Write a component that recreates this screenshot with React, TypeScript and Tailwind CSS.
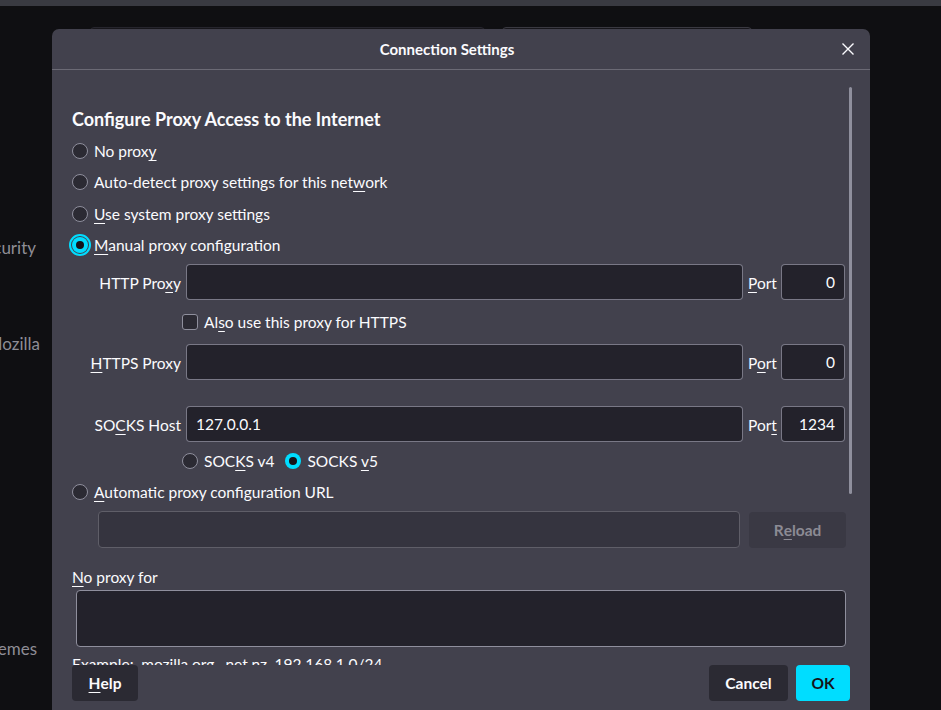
import { ReactNode } from "react";

function U({ children }: { children: ReactNode }) {
  return <span className="underline underline-offset-[3px] decoration-1">{children}</span>;
}

function Radio({ checked = false, focus = false }: { checked?: boolean; focus?: boolean }) {
  if (checked) {
    return (
      <span
        className={`flex h-[16px] w-[16px] shrink-0 items-center justify-center rounded-full bg-[#00ddff] ${
          focus ? "outline-2 outline-offset-1 outline-[#00ddff]" : ""
        }`}
      >
        <span className="h-[8px] w-[8px] rounded-full bg-[#15141a]" />
      </span>
    );
  }
  return <span className="h-[16px] w-[16px] shrink-0 rounded-full border border-[#8f8f9d] bg-[#2b2a33]" />;
}

function Field({ value = "", className = "" }: { value?: string; className?: string }) {
  return (
    <div
      className={`flex h-[36px] items-center rounded-[4px] border border-[#8f8f9d]/80 bg-[#23222b] pt-[2px] ${className}`}
    >
      {value}
    </div>
  );
}

function ProxyRow({ label, port, portLabel, host = "" }: { label: ReactNode; port: string; portLabel: ReactNode; host?: string }) {
  return (
    <div className="flex h-[36px] items-center">
      <div className="w-[110px] shrink-0 whitespace-nowrap pr-[1px] pt-[3px] text-right">{label}</div>
      <Field value={host} className="ml-[4px] flex-1 pl-[9px]" />
      <div className="ml-[5px] w-[28px] whitespace-nowrap pt-[3px]">{portLabel}</div>
      <Field value={port} className="ml-[5px] w-[64px] justify-end pr-[9px]" />
    </div>
  );
}

export default function App() {
  return (
    <div className="relative h-[710px] w-[941px] overflow-hidden bg-[#0f0f12] font-['Lato',sans-serif] text-[15.5px] text-[#fbfbfe]">
      {/* page behind the modal */}
      <div className="h-[6px] bg-[#393a41]" />
      <div className="flex">
        <div className="w-[52px] shrink-0 text-[17px] leading-[24px] text-[#8e8d95]">
          <div className="mt-[230px] flex justify-end whitespace-nowrap pr-[16px]">Privacy &amp; Security</div>
          <div className="mt-[72px] flex justify-end whitespace-nowrap pr-[12px]">More from Mozilla</div>
          <div className="mt-[281px] flex justify-end whitespace-nowrap pr-[15px]">Extensions &amp; Themes</div>
        </div>
        <div className="mt-[21px] flex gap-[17px] pl-[38px]">
          <div className="h-[36px] w-[395px] rounded-[4px] border border-[#26252d] bg-[#17161b]" />
          <div className="h-[36px] w-[250px] rounded-[4px] border border-[#3a3941] bg-[#17161b]" />
        </div>
      </div>

      {/* modal dialog */}
      <div className="absolute left-[52px] top-[29px] flex h-[684px] w-[818px] flex-col rounded-t-[7px] bg-[#42414d]">
        <div className="flex h-[41px] shrink-0 items-center border-b border-[#6b6a75]">
          <div className="flex-1 text-center text-[15px] font-bold">Connection Settings</div>
          <svg width="12" height="12" viewBox="0 0 12 12" className="mr-[16px] shrink-0">
            <path d="M0.5 0.5 L11.5 11.5 M11.5 0.5 L0.5 11.5" stroke="#fbfbfe" strokeWidth="1.4" />
          </svg>
        </div>

        <div className="relative h-[595px] shrink-0 overflow-hidden pl-[20px] pr-[25px] pt-[37px]">
          <div className="absolute right-[18px] top-[17px] h-[407px] w-[3px] rounded-full bg-[#8f8f9d]" />

          <div className="h-[24px] text-[18px] font-bold leading-[24px]">Configure Proxy Access to the Internet</div>

          <div className="mt-[4px]">
            <div className="flex h-[31px] items-center gap-[6px]">
              <Radio />
              <span className="pt-[2px]">No prox<U>y</U></span>
            </div>
            <div className="flex h-[32px] items-center gap-[6px]">
              <Radio />
              <span className="pt-[2px]">Auto-detect proxy settings for this net<U>w</U>ork</span>
            </div>
            <div className="flex h-[31px] items-center gap-[6px]">
              <Radio />
              <span className="pt-[2px]"><U>U</U>se system proxy settings</span>
            </div>
            <div className="flex h-[31px] items-center gap-[6px]">
              <Radio checked focus />
              <span className="pt-[2px]"><U>M</U>anual proxy configuration</span>
            </div>
          </div>

          <div className="mt-[4px]">
            <ProxyRow label={<>HTTP Pro<U>x</U>y</>} portLabel={<><U>P</U>ort</>} port="0" />
            <div className="flex h-[44px] items-center pl-[110px]">
              <span className="h-[16px] w-[16px] rounded-[3px] border border-[#8f8f9d] bg-[#2b2a33]" />
              <span className="ml-[6px] pt-[2px]">Al<U>s</U>o use this proxy for HTTPS</span>
            </div>
            <ProxyRow label={<><U>H</U>TTPS Proxy</>} portLabel={<>P<U>o</U>rt</>} port="0" />
            <div className="mt-[26px]">
              <ProxyRow label={<>SO<U>C</U>KS Host</>} portLabel={<>Por<U>t</U></>} port="1234" host="127.0.0.1" />
            </div>
            <div className="mt-[4px] flex h-[30px] items-center pl-[110px]">
              <Radio />
              <span className="ml-[6px] pt-[2px]">SOC<U>K</U>S v4</span>
              <span className="ml-[11px]" />
              <Radio checked />
              <span className="ml-[6px] pt-[2px]">SOCKS <U>v</U>5</span>
            </div>
          </div>

          <div className="mt-[1px] flex h-[30px] items-center gap-[6px]">
            <Radio />
            <span className="pt-[2px]"><U>A</U>utomatic proxy configuration URL</span>
          </div>
          <div className="mt-[4px] flex items-center pl-[26px]">
            <div className="h-[37px] flex-1 rounded-[4px] border border-[#5f5e68] bg-[#35343f]" />
            <div className="ml-[9px] mr-[-1px] flex h-[36px] w-[97px] items-center justify-center rounded-[4px] bg-[#3a3944] pt-[3px] font-bold text-[#8c8b94]">
              R<U>e</U>load
            </div>
          </div>

          <div className="mt-[17px] h-[20px] pt-[2px] leading-[20px]">
            <U>N</U>o proxy for
          </div>
          <div className="ml-[4px] mr-[-1px] mt-[5px] h-[57px] rounded-[4px] border border-[#8f8f9d] bg-[#23222b]" />
          <div className="mt-[5px] h-[20px] pt-[2px] leading-[20px]">Example: .mozilla.org, .net.nz, 192.168.1.0/24</div>
        </div>

        <div className="flex shrink-0 items-start px-[20px]">
          <div className="flex h-[36px] w-[66px] items-center justify-center rounded-[4px] bg-[#2b2a33] pt-[2px] font-bold">
            <U>H</U>elp
          </div>
          <div className="flex-1" />
          <div className="flex h-[36px] w-[79px] items-center justify-center rounded-[4px] bg-[#2b2a33] pt-[2px] font-bold">
            Cancel
          </div>
          <div className="ml-[8px] flex h-[36px] w-[54px] items-center justify-center rounded-[4px] bg-[#00ddff] pt-[2px] font-bold text-[#15141a]">
            OK
          </div>
        </div>
      </div>
    </div>
  );
}
